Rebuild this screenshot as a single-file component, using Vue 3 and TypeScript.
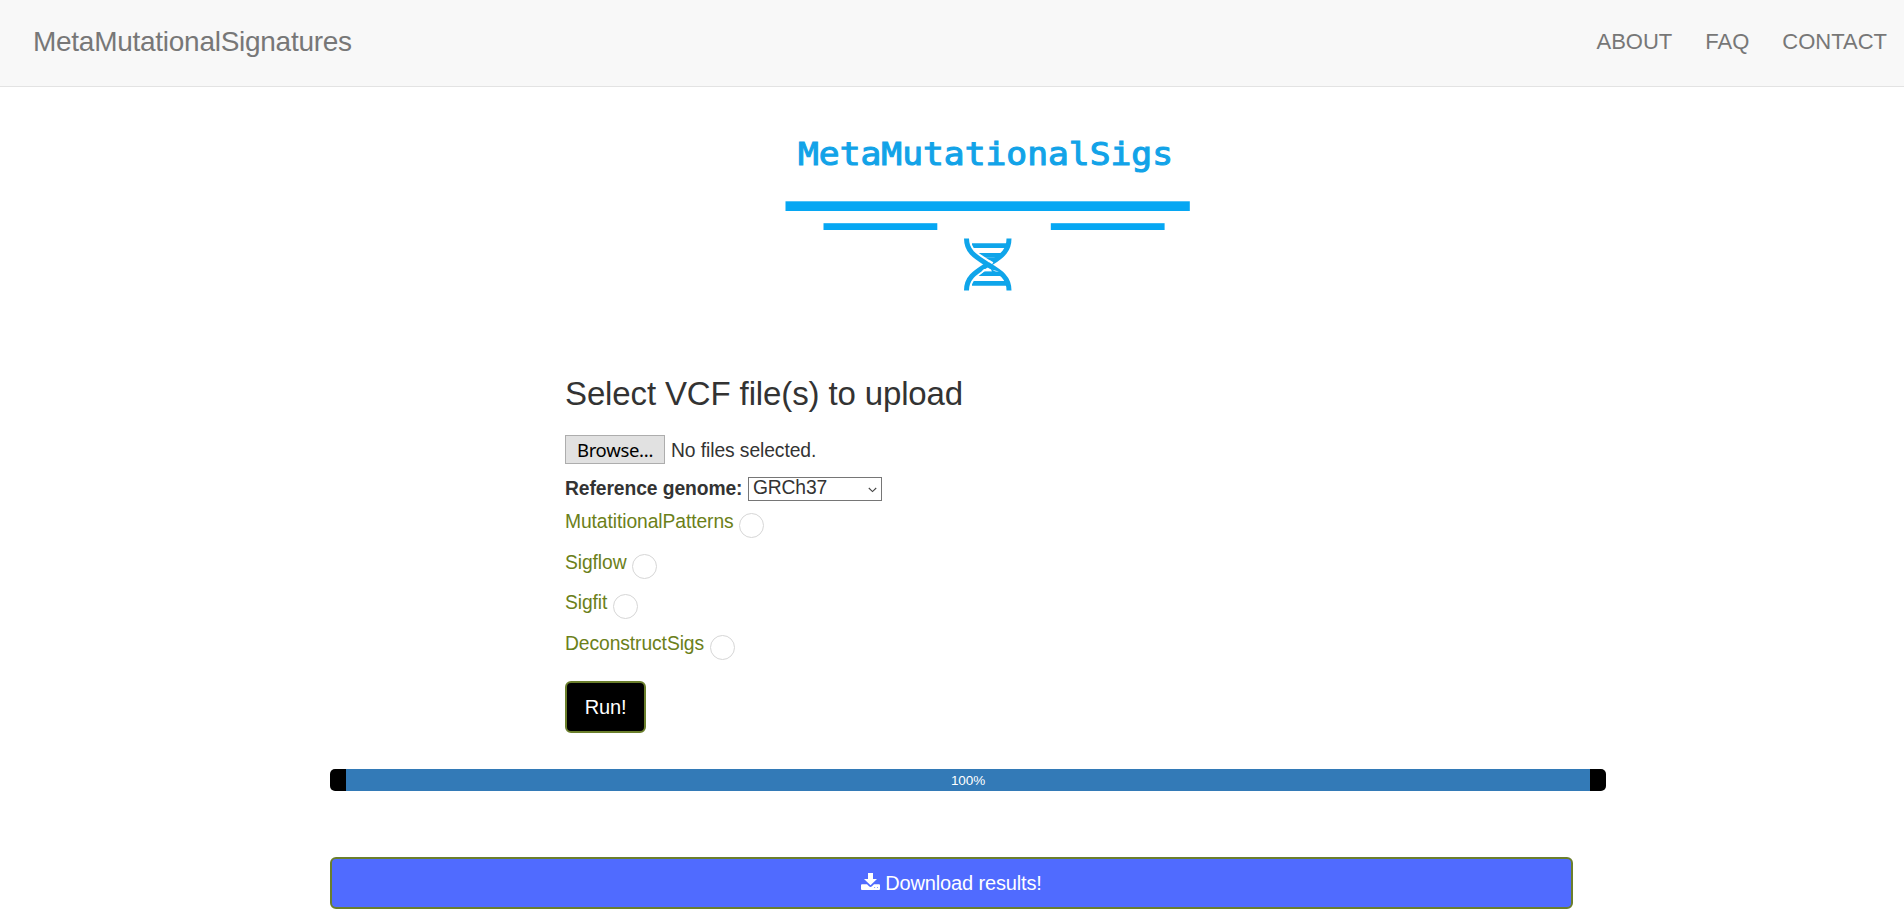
<script setup lang="ts">
import { ref } from 'vue'

interface Tool {
  id: string
  name: string
}

const links: string[] = ['ABOUT', 'FAQ', 'CONTACT']
const genomes: string[] = ['GRCh37', 'GRCh38']
const tools: Tool[] = [
  { id: 'mutational-patterns', name: 'MutatitionalPatterns' },
  { id: 'sigflow', name: 'Sigflow' },
  { id: 'sigfit', name: 'Sigfit' },
  { id: 'deconstruct', name: 'DeconstructSigs' },
]
const genome = ref<string>('GRCh37')
const selected = ref<string[]>([])
const progress = ref<number>(100)
</script>

<template>
  <div class="page">
    <nav class="navbar">
      <a class="brand">MetaMutationalSignatures</a>
      <div class="links">
        <a v-for="link in links" :key="link">{{ link }}</a>
      </div>
    </nav>

    <svg class="logo" width="412" height="165" viewBox="0 0 412 165">
      <text class="logo-text" x="18" y="35" textLength="375" lengthAdjust="spacingAndGlyphs">MetaMutationalSigs</text>
      <g fill="#06a7f3">
        <rect x="5.5" y="71.3" width="404.3" height="9.7" />
        <rect x="43.5" y="93.2" width="113.8" height="6.8" />
        <rect x="270.8" y="93.2" width="113.8" height="6.8" />
      </g>
      <g transform="translate(184 108)">
        <g fill="#0fa5ea">
          <path d="M8 5.2H44L41 9.9H8Z" />
          <path d="M12 15H40L36.5 19.3H12Z" />
          <path d="M18 19.3H36L29 23.5H18Z" />
          <path d="M14 33.6H37L41 38.1H12Z" />
          <path d="M8 43H43L45 47.8H8Z" />
        </g>
        <g fill="none" stroke="#0fa5ea" stroke-width="5">
          <path d="M45 .5C45 12 39 17.5 27 25" />
          <path class="gap" d="M2.5 .5C2.5 14 12 19 23.7 26.2L27 28.2" />
          <path class="gap" d="M23.7 26.5C12 34 2.5 39 2.5 52.5" />
          <path d="M2.5 .5C2.5 14 12 19 23.7 26.5C36 34 45 39 45 52.5" />
          <path d="M24.5 26C12 34 2.5 39 2.5 52.5" />
        </g>
        <path d="M25 31L35 33.6H17.5L20 31Z" fill="#fff" />
        <path d="M26.5 30.4L38 38.1H15.4L20.5 33.6H28Z" fill="#0fa5ea" />
      </g>
    </svg>

    <form class="form" @submit.prevent>
      <h1>Select VCF file(s) to upload</h1>
      <div class="file-row">
        <button type="button" class="browse">Browse...</button>
        <span>No files selected.</span>
      </div>
      <div class="genome-row">
        <label for="genome">Reference genome:</label>
        <div class="select-wrap">
          <select id="genome" v-model="genome">
            <option v-for="g in genomes" :key="g">{{ g }}</option>
          </select>
          <svg class="chevron" width="9" height="6" viewBox="0 0 9 6">
            <path d="M.8 1L4.5 4.6L8.2 1" fill="none" stroke="#444" stroke-width="1.1" />
          </svg>
        </div>
      </div>
      <label v-for="tool in tools" :key="tool.id" class="tool">
        <span>{{ tool.name }}</span>
        <input v-model="selected" type="checkbox" :value="tool.id" />
      </label>
      <button type="submit" class="run">Run!</button>
    </form>

    <section class="results">
      <div class="progress">
        <div class="track">
          <div class="bar" :style="{ width: progress + '%' }">{{ progress }}%</div>
        </div>
      </div>
      <button type="button" class="download">
        <svg width="19" height="18" viewBox="0 0 19 18">
          <path
            fill="#fff"
            fill-rule="evenodd"
            d="M7 0H12V6H16L9.5 12.3L3 6H7ZM1 11.3H6L8 13.3Q9.5 14.6 11 13.3L13 11.3H18Q19 11.3 19 12.3V16Q19 17 18 17H1Q0 17 0 16V12.3Q0 11.3 1 11.3ZM13.2 14.2V15.1H14.1V14.2ZM16 14.2V15.1H16.9V14.2Z"
          />
        </svg>
        <span>Download results!</span>
      </button>
    </section>
  </div>
</template>

<style>
body {
  margin: 0;
  background: #fff;
}
</style>

<style scoped>
.page {
  height: 921px;
  overflow: hidden;
  font-family: "Liberation Sans", Arial, sans-serif;
  font-size: 19.3px;
  letter-spacing: -0.09px;
  color: #333;
}
.navbar {
  box-sizing: border-box;
  height: 87px;
  padding: 0 17px 3px 33px;
  display: flex;
  align-items: center;
  justify-content: space-between;
  background: #f8f8f8;
  border-bottom: 1px solid #e3e3e3;
  color: #777;
}
.brand {
  font-size: 28px;
  letter-spacing: -0.27px;
}
.links {
  display: flex;
  gap: 33px;
  font-size: 22px;
  letter-spacing: 0;
}
.logo {
  display: block;
  margin: 43px 0 0 780px;
}
.logo-text {
  font-family: "DejaVu Sans Mono", monospace;
  font-size: 32.5px;
  fill: #12a3e8;
  stroke: #12a3e8;
  stroke-width: 1.1px;
  letter-spacing: 0;
}
.gap {
  stroke: #fff;
  stroke-width: 9;
}
.form {
  margin-left: 565px;
}
h1 {
  margin: 79px 0 21px;
  font-size: 33px;
  font-weight: 400;
  letter-spacing: -0.13px;
  line-height: 40px;
}
.file-row {
  display: flex;
  align-items: center;
  gap: 6px;
  height: 29px;
}
.file-row span {
  padding-top: 2px;
}
.browse {
  box-sizing: border-box;
  width: 100px;
  height: 29px;
  padding: 0;
  border: 1px solid #adadad;
  background: #e1e1e1;
  color: #000;
  font: 18.5px/25px "Noto Sans", "Open Sans", sans-serif;
  letter-spacing: -0.3px;
}
.genome-row {
  display: flex;
  align-items: center;
  gap: 5.5px;
  margin-top: 13px;
  height: 24px;
}
.genome-row label {
  padding-bottom: 1px;
  font-weight: 700;
}
.select-wrap {
  position: relative;
  width: 134px;
  height: 24px;
}
select {
  display: block;
  box-sizing: border-box;
  width: 100%;
  height: 100%;
  padding: 0 0 2px 4px;
  appearance: none;
  border: 1px solid #767676;
  border-radius: 0;
  background: #fff;
  color: #333;
  font: inherit;
  letter-spacing: -0.15px;
  line-height: 20px;
}
.chevron {
  position: absolute;
  right: 5px;
  top: 10px;
}
.tool {
  display: flex;
  align-items: center;
  gap: 5.5px;
  height: 40.7px;
  color: #6b8019;
}
.tool span {
  padding-top: 1px;
}
.tool input {
  appearance: none;
  box-sizing: border-box;
  width: 25px;
  height: 25px;
  margin: 8px 0 0;
  border: 1px solid #d6d6d6;
  border-radius: 50%;
  background: #fff;
}
.run,
.download {
  box-sizing: border-box;
  height: 52px;
  padding: 1px 0 0;
  border: 2px solid #6b7f2c;
  border-radius: 6px;
  color: #fff;
  font: 20px "Liberation Sans", Arial, sans-serif;
  letter-spacing: -0.15px;
}
.run {
  display: block;
  width: 81px;
  margin-top: 17px;
  background: #000;
}
.results {
  width: 1276px;
  margin: 36px 0 0 330px;
}
.progress {
  height: 22px;
  padding: 0 16px;
  background: #000;
  border-radius: 5px;
  box-sizing: border-box;
}
.track,
.bar {
  height: 100%;
}
.bar {
  background: #337ab7;
  color: #fff;
  font-size: 13.5px;
  line-height: 23px;
  text-align: center;
}
.download {
  display: flex;
  align-items: center;
  justify-content: center;
  gap: 5px;
  width: 1243px;
  margin-top: 66px;
  background: #506bff;
}
.download svg {
  margin-bottom: 2px;
}
</style>
